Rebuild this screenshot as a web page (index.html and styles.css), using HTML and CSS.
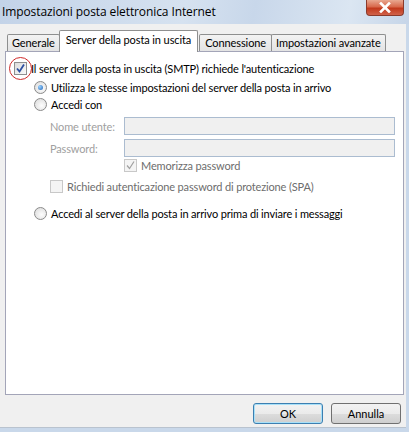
FILE: index.html
```html
<!DOCTYPE html>
<html lang="it">
<head>
    <meta charset="UTF-8">
    <title>Impostazioni posta elettronica Internet</title>
    <link rel="stylesheet" href="styles.css">
</head>
<body>

<div class="window">
    <!-- Title bar -->
    <div class="titlebar">
        <span class="title">Impostazioni posta elettronica Internet</span>
        <div class="close">
            <svg width="14" height="11" viewBox="0 0 14 11">
                <path d="M3 1.5 L11 9.5 M11 1.5 L3 9.5" stroke="#fff" stroke-width="2.6" stroke-linecap="square"/>
            </svg>
        </div>
    </div>

    <div class="client">
        <!-- Tabs -->
        <div class="tabs">
            <div class="tab">Generale</div>
            <div class="tab active">Server della posta in uscita</div>
            <div class="tab wide">Connessione</div>
            <div class="tab">Impostazioni avanzate</div>
        </div>

        <div class="panel">
            <div class="row top">
                <span class="check on">
                    <svg width="11" height="11" viewBox="0 0 11 11"><path d="M2 5.5 L4.5 8.5 L9 1.5" fill="none" stroke="#2d4fa0" stroke-width="1.8"/></svg>
                    <span class="ring"></span>
                </span>
                <span>Il server della posta in uscita (SMTP) richiede l'autenticazione</span>
            </div>

            <div class="row opt first">
                <span class="radio on"><span class="dot"></span></span>
                <span>Utilizza le stesse impostazioni del server della posta in arrivo</span>
            </div>
            <div class="row opt">
                <span class="radio"></span>
                <span>Accedi con</span>
            </div>

            <div class="field user">
                <label>Nome utente:</label>
                <div class="input"></div>
            </div>
            <div class="field">
                <label>Password:</label>
                <div class="input"></div>
            </div>

            <div class="row remember disabled">
                <span class="check dim">
                    <svg width="11" height="11" viewBox="0 0 11 11"><path d="M2 5.5 L4.5 8.5 L9 1.5" fill="none" stroke="#a0a0a0" stroke-width="1.2"/></svg>
                </span>
                <span>Memorizza password</span>
            </div>
            <div class="row spa disabled">
                <span class="check dim"></span>
                <span>Richiedi autenticazione password di protezione (SPA)</span>
            </div>

            <div class="row opt last">
                <span class="radio"></span>
                <span>Accedi al server della posta in arrivo prima di inviare i messaggi</span>
            </div>
        </div>

        <!-- Buttons -->
        <div class="buttons">
            <button class="btn default">OK</button>
            <button class="btn">Annulla</button>
        </div>
    </div>
</div>

</body>
</html>
```

FILE: styles.css
```css
body {
    margin: 0;
    font-family: Lato, "Open Sans", sans-serif;
    font-size: 11px;
    color: #000;
    background: #fff;
}
.window {
    width: 409px;
    height: 432px;
    box-sizing: border-box;
    display: flex;
    flex-direction: column;
    background: #c9d8ea;
}
.titlebar {
    height: 24px;
    display: flex;
    align-items: flex-start;
    justify-content: space-between;
    background: linear-gradient(100deg, #c3d3e8 0%, #d6e2f0 45%, #c8d7ea 62%, #dbe6f2 85%, #c6d5e8 100%);
}
.title {
    font-family: "Open Sans", sans-serif;
    font-size: 12px;
    padding: 3px 0 0 2px;
    letter-spacing: -0.1px;
}
.close {
    width: 36px;
    height: 15px;
    margin-right: 5px;
    display: flex;
    align-items: center;
    justify-content: center;
    border: 1px solid #8b3a2b;
    border-top: none;
    border-radius: 0 0 4px 4px;
    background: linear-gradient(#e9a890 0%, #d8694c 45%, #c2391c 55%, #d0624a 100%);
}
.client {
    flex: 1;
    display: flex;
    flex-direction: column;
    background: #f0f0f0;
    margin: 0 3px 4px 0;
    padding: 7px 2px 0 5px;
    border-bottom: 1px solid #b9c3cf;
}
.tabs {
    display: flex;
    align-items: flex-end;
    height: 20px;
    padding-left: 2px;
    position: relative;
    z-index: 1;
}
.tab {
    height: 16px;
    padding: 0 4px;
    line-height: 16px;
    border: 1px solid #8e8f8f;
    border-bottom: none;
    margin-right: -1px;
    background: linear-gradient(#f3f3f3, #e3e3e3);
    border-radius: 2px 2px 0 0;
    font-size: 11px;
    letter-spacing: -0.1px;
    white-space: nowrap;
}
.tab.wide {
    padding: 0 5px;
}
.tab.active {
    height: 21px;
    line-height: 18px;
    background: #fff;
    margin: 0 1px -1px 0;
    padding: 0 6px;
}
.panel {
    height: 344px;
    background: #fff;
    border: 1px solid #a3a5b8;
    padding: 0 8px;
    box-sizing: border-box;
    letter-spacing: -0.15px;
}
.row {
    display: flex;
    align-items: center;
    gap: 4px;
    height: 16px;
    font-size: 11px;
}
.row.top {
    margin-top: 6px;
    height: 20px;
}
.check {
    width: 11px;
    height: 11px;
    border: 1px solid #8f8f8f;
    background: linear-gradient(135deg, #dcdcdc, #fafafa);
    display: flex;
    align-items: center;
    justify-content: center;
    flex: none;
    position: relative;
}
.check svg {
    display: block;
}
.ring {
    position: absolute;
    left: -6px;
    top: -6px;
    width: 21px;
    height: 21px;
    border: 1px solid #d02a2a;
    border-radius: 50%;
}
.check.dim {
    border-color: #c8c8c8;
    background: #f4f4f4;
}
.opt {
    margin: 1px 0 0 20px;
}
.radio {
    width: 11px;
    height: 11px;
    border: 1px solid #8a8a8a;
    border-radius: 50%;
    background: radial-gradient(circle at 60% 60%, #fdfdfd, #d8d8d8);
    display: flex;
    align-items: center;
    justify-content: center;
    flex: none;
}
.radio .dot {
    width: 5px;
    height: 5px;
    border-radius: 50%;
    background: radial-gradient(circle at 35% 35%, #9cd4ff, #1f63b8);
}
.field {
    display: flex;
    align-items: center;
    height: 18px;
    margin: 4px 0 0 36px;
}
.field.user {
    margin-top: 5px;
}
.field label {
    width: 74px;
    color: #a0a0a0;
    font-size: 11px;
}
.input {
    flex: 1;
    height: 16px;
    border: 1px solid #abbcd0;
    background: #f0f0f0;
}
.disabled {
    color: #6d6d6d;
}
.remember {
    margin: 0 0 0 110px;
}
.spa {
    margin: 5px 0 0 36px;
}
.opt.last {
    margin-top: 11px;
}
.buttons {
    display: flex;
    justify-content: flex-end;
    gap: 8px;
    padding: 8px 3px 0 0;
}
.btn {
    width: 70px;
    height: 21px;
    font-family: inherit;
    font-size: 11px;
    padding: 0;
    border: 1px solid #707070;
    border-radius: 3px;
    background: linear-gradient(#f2f2f2 0%, #ebebeb 50%, #dddddd 51%, #cfcfcf 100%);
}
.btn.default {
    border-color: #3c7fb1;
    box-shadow: inset 0 0 0 1px #a8e0f8;
}
```
